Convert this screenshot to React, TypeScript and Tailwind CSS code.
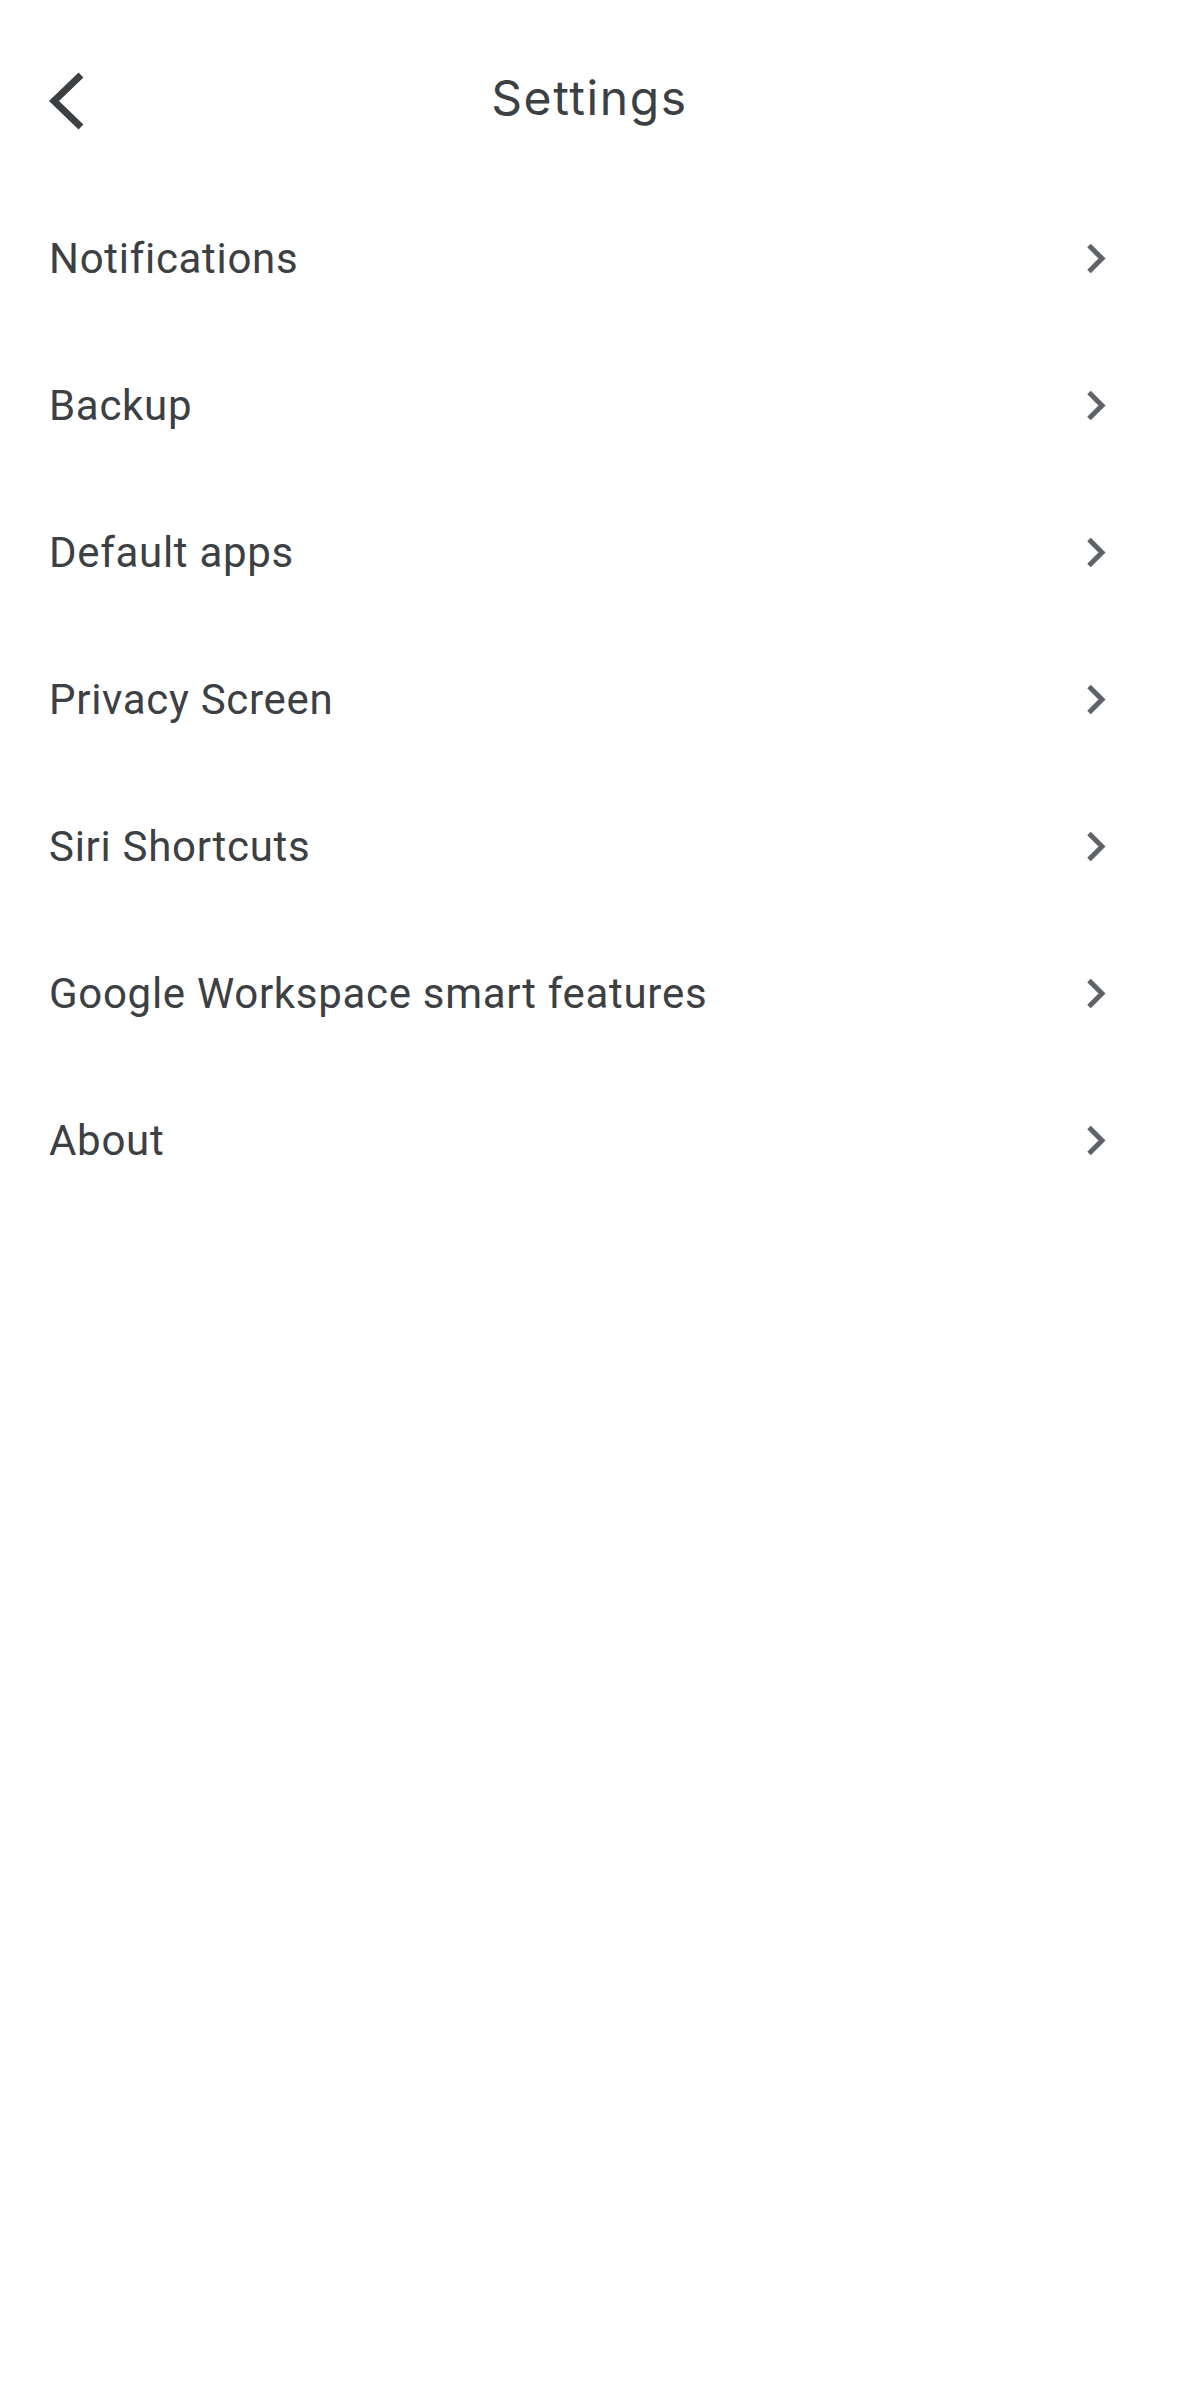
import React from "react";

const items = [
  "Notifications",
  "Backup",
  "Default apps",
  "Privacy Screen",
  "Siri Shortcuts",
  "Google Workspace smart features",
  "About",
];

function BackIcon() {
  return (
    <svg width="50" height="60" viewBox="0 0 50 60" fill="none">
      <path
        d="M41 4 L14 30 L41 56"
        stroke="#3c4043"
        strokeWidth="7"
        strokeLinecap="butt"
        strokeLinejoin="miter"
      />
    </svg>
  );
}

function ChevronRight() {
  return (
    <svg width="30" height="40" viewBox="0 0 30 40" fill="none">
      <path
        d="M9 7.5 L22 20.5 L9 33.5"
        stroke="#5f6368"
        strokeWidth="5"
        strokeLinecap="butt"
        strokeLinejoin="miter"
      />
    </svg>
  );
}

export default function App() {
  return (
    <div className="min-h-screen w-full bg-white">
      {/* header */}
      <div className="grid h-[184px] grid-cols-[1fr_auto_1fr] items-center pt-[18px]">
        <div className="flex pl-[40px]">
          <button className="flex items-center">
            <BackIcon />
          </button>
        </div>
        <h1 className="mb-[6px] font-['Inter',sans-serif] text-[48px] leading-none tracking-[1.6px] text-[#3c4043]">
          Settings
        </h1>
        <div />
      </div>

      {/* list */}
      <ul className="flex flex-col">
        {items.map((item) => (
          <li
            key={item}
            className="flex h-[147px] cursor-pointer items-center justify-between pl-[49px] pr-[69px]"
          >
            <span className="mt-[2px] font-['Roboto',sans-serif] text-[42px] leading-none tracking-[0.7px] text-[#3c4043]">
              {item}
            </span>
            <ChevronRight />
          </li>
        ))}
      </ul>
    </div>
  );
}
